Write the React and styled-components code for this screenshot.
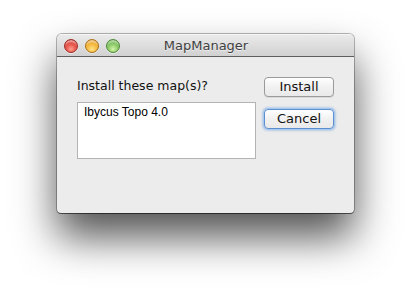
import React from "react";
import styled, { createGlobalStyle } from "styled-components";

const GlobalStyle = createGlobalStyle`
  html, body {
    margin: 0;
    padding: 0;
    background: #ffffff;
  }
  body {
    font-family: "DejaVu Sans", "Liberation Sans", sans-serif;
  }
`;

const Page = styled.div`
  width: 411px;
  height: 292px;
  padding: 34px 0 0 57px;
  box-sizing: border-box;
  overflow: hidden;
`;

const Window = styled.div`
  width: 297px;
  height: 179px;
  border-radius: 5px 5px 4px 4px;
  background: #ececec;
  box-shadow: 0 24px 42px rgba(0, 0, 0, 0.68), 0 0 0 1px rgba(0, 0, 0, 0.28),
    0 1px 0 rgba(0, 0, 0, 0.4);
  display: flex;
  flex-direction: column;
  overflow: hidden;
`;

const TitleBar = styled.div`
  position: relative;
  height: 22px;
  flex: none;
  display: flex;
  align-items: center;
  justify-content: center;
  background: linear-gradient(#ebebeb, #d1d1d1);
  border-bottom: 1px solid #5e5e5e;
  box-shadow: inset 0 1px 0 #f6f6f6;
`;

const Lights = styled.div`
  position: absolute;
  left: 7px;
  top: 5px;
  display: flex;
  gap: 7px;
`;

const Light = styled.span`
  width: 12px;
  height: 12px;
  border-radius: 50%;
  border: 0.5px solid ${(p) => p.$edge};
  background: radial-gradient(
    circle at 50% 75%,
    ${(p) => p.$glow} 0%,
    ${(p) => p.$color} 55%,
    ${(p) => p.$dark} 100%
  );
  box-shadow: inset 0 3px 2px -1px rgba(255, 255, 255, 0.6),
    0 1px 0 rgba(255, 255, 255, 0.5);
`;

const Title = styled.div`
  font-size: 13px;
  color: #3f3f3f;
  text-shadow: 0 1px 0 rgba(255, 255, 255, 0.6);
  margin-left: 1px;
`;

const Body = styled.div`
  display: flex;
  gap: 8px;
  padding: 19px 20px 0 20px;
`;

const Main = styled.div`
  width: 179px;
  display: flex;
  flex-direction: column;
`;

const Prompt = styled.div`
  font-size: 12.5px;
  line-height: 16px;
  color: #111;
  margin-top: 2px;
  margin-bottom: 8px;
`;

const ListBox = styled.div`
  height: 57px;
  box-sizing: border-box;
  background: #fff;
  border: 1px solid #b3b3b3;
  padding: 2px 6px;
  font-family: "Liberation Sans", Arial, sans-serif;
  font-size: 12px;
  line-height: 15px;
  color: #000;
`;

const Side = styled.div`
  display: flex;
  flex-direction: column;
  gap: 12px;
  padding-top: 1px;
`;

const Button = styled.button`
  width: 70px;
  height: 20px;
  box-sizing: border-box;
  padding: 0;
  border-radius: 4px;
  border: 1px solid ${(p) => (p.$focused ? "#5b8fd0" : "#9a9a9a")};
  background: linear-gradient(#ffffff, #f1f1f1 50%, #e9e9e9);
  box-shadow: ${(p) =>
    p.$focused
      ? "0 0 0 1px #a8c8ee, 0 0 2px 2px rgba(90, 150, 220, 0.35)"
      : "0 1px 0 rgba(0, 0, 0, 0.08)"};
  font-family: "DejaVu Sans", "Liberation Sans", sans-serif;
  font-size: 13px;
  color: #111;
  line-height: 18px;
`;

export default function App() {
  return (
    <>
      <GlobalStyle />
      <Page>
        <Window>
          <TitleBar>
            <Lights>
              <Light $color="#e2453c" $glow="#ff9e8c" $dark="#b3201a" $edge="#9c2b25" />
              <Light $color="#f2ae2b" $glow="#ffe48a" $dark="#c97f10" $edge="#a87118" />
              <Light $color="#7cc15a" $glow="#d4f4a8" $dark="#4a8f2b" $edge="#4f8a34" />
            </Lights>
            <Title>MapManager</Title>
          </TitleBar>
          <Body>
            <Main>
              <Prompt>Install these map(s)?</Prompt>
              <ListBox>Ibycus Topo 4.0</ListBox>
            </Main>
            <Side>
              <Button>Install</Button>
              <Button $focused>Cancel</Button>
            </Side>
          </Body>
        </Window>
      </Page>
    </>
  );
}
